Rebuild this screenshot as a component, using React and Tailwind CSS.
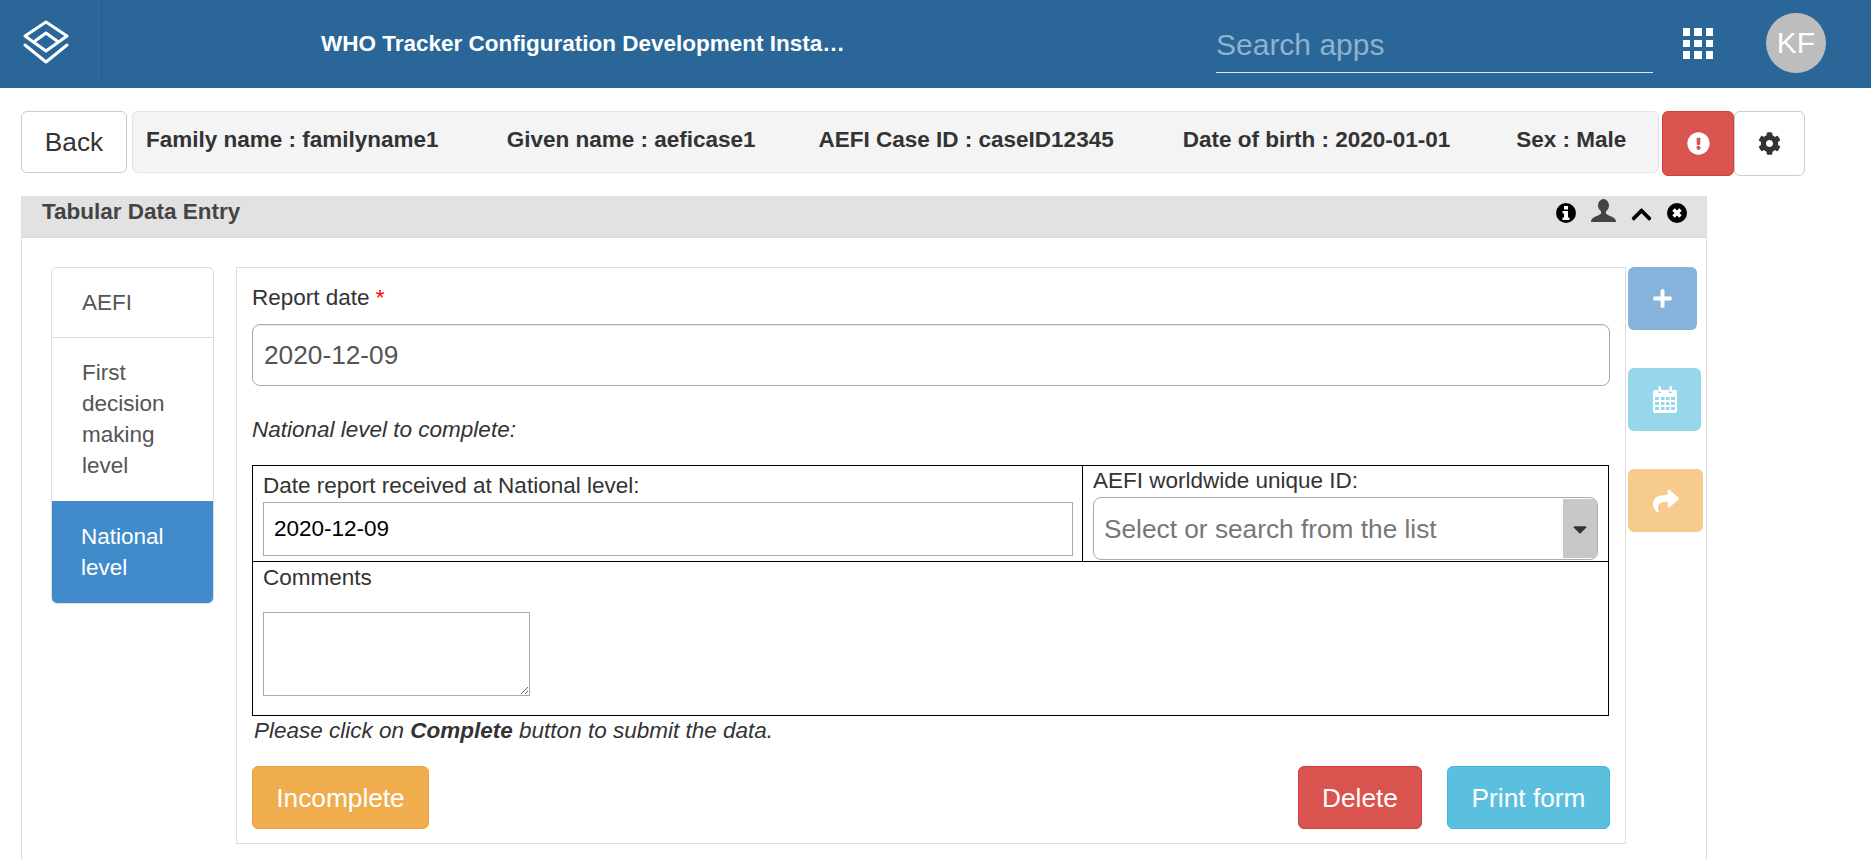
import React from "react";
import { FaCog, FaExclamationCircle, FaPlus, FaShare, FaChevronUp, FaCaretDown } from "react-icons/fa";

const sideItems = ["AEFI", "First decision making level"];

function Logo() {
  return (
    <svg width="46" height="44" viewBox="0 0 46 44" fill="none" stroke="white" strokeWidth="3" strokeLinejoin="round" strokeLinecap="round">
      <path d="M23 2 L44 16 L23 31 L2 16 Z" />
      <path d="M12 21 L23 13 L34 21" />
      <path d="M2 25 L23 42 L44 25" />
    </svg>
  );
}

function AppsGrid() {
  return (
    <div className="grid grid-cols-3 gap-[4px] w-[30px]">
      {Array.from({ length: 9 }).map((_, i) => (
        <div key={i} className="h-[7.5px] bg-white" />
      ))}
    </div>
  );
}

function CalendarIcon() {
  return (
    <svg width="24" height="27" viewBox="0 0 24 27" fill="white">
      <path fillRule="evenodd" d="M2 4h3v3h3V4h8v3h3V4h3a2 2 0 0 1 2 2v19a2 2 0 0 1-2 2H2a2 2 0 0 1-2-2V6a2 2 0 0 1 2-2zM2 11v3h4v-3zM8 11v3h3.500v-3zM13 11v3h3.500v-3zM18 11v3h4v-3zM2 16v3h4v-3zM8 16v3h3.500v-3zM13 16v3h3.500v-3zM18 16v3h4v-3zM2 21v3h4v-3zM8 21v3h3.500v-3zM13 21v3h3.500v-3zM18 21v3h4v-3z" />
      <rect x="5.500" y="0" width="2.500" height="6" rx="1.200" />
      <rect x="16.500" y="0" width="2.500" height="6" rx="1.200" />
    </svg>
  );
}

function InfoIcon() {
  return (
    <svg width="20" height="20" viewBox="0 0 20 20" className="mt-[7px]">
      <circle cx="10" cy="10" r="10" fill="black" />
      <rect x="8" y="3" width="4" height="3.500" fill="white" />
      <path d="M6.500 8h5.500v6.500h1.500v2.500h-7v-2.500h1.500v-4h-1.500z" fill="white" />
    </svg>
  );
}

function CloseIcon() {
  return (
    <svg width="20" height="20" viewBox="0 0 20 20" className="ml-[14px] mt-[7px]">
      <circle cx="10" cy="10" r="10" fill="black" />
      <path d="M6.500 6.500l7 7M13.500 6.500l-7 7" stroke="white" strokeWidth="3.500" />
    </svg>
  );
}

function UserIcon() {
  return (
    <svg width="25" height="23" viewBox="0 0 25 23" fill="#444" className="ml-[15px] mt-[3px]">
      <ellipse cx="12.500" cy="6.500" rx="5.500" ry="6.500" />
      <path d="M10 11h5v3.500c0 1 5 2.500 8 4.500 1.300 1 2 2.500 2 4H0c0-1.500.7-3 2-4 3-2 8-3.500 8-4.500z" />
    </svg>
  );
}

export default function App() {
  return (
    <div className="font-['Liberation_Sans',Arial,sans-serif] text-[22.5px] leading-[28px] text-[#333] bg-white min-h-screen">
      {/* Top bar */}
      <header className="h-[88px] bg-[#2a6698] flex items-start">
        <div className="w-[102px] h-[81px] border-r border-[#255d8a] flex items-start pl-[23px] pt-[20px]">
          <Logo />
        </div>
        <div className="ml-[219px] mt-[29px] w-[530px] font-bold text-white leading-[30px] whitespace-nowrap">
          WHO Tracker Configuration Development Insta…
        </div>
        <input
          className="ml-[365px] mt-[21px] w-[437px] h-[52px] pb-[3px] bg-transparent border-b border-[#dfe8ef] text-[30px] outline-none text-white placeholder:text-[#8fb2cd]"
          placeholder="Search apps"
        />
        <div className="ml-[30px] mt-[28px]">
          <AppsGrid />
        </div>
        <div className="ml-[53px] mt-[13px] w-[60px] h-[60px] rounded-full bg-[#bdbdbd] text-white text-[30px] flex items-center justify-center">
          KF
        </div>
      </header>

      {/* Patient info */}
      <div className="mt-[23px] pl-[21px] flex items-start">
        <button className="w-[106px] h-[62px] bg-white border border-[#ccc] rounded-[6px] text-[26.25px]">Back</button>
        <div className="ml-[5px] w-[1527px] h-[62px] bg-[#f4f4f4] border border-[#e3e3e3] rounded-[6px] pl-[13px] pt-[13px] flex font-bold leading-[30px] whitespace-nowrap">
          <span>Family name : familyname1</span>
          <span className="ml-[68px]">Given name : aeficase1</span>
          <span className="ml-[63px]">AEFI Case ID : caseID12345</span>
          <span className="ml-[69px]">Date of birth : 2020-01-01</span>
          <span className="ml-[66px]">Sex : Male</span>
        </div>
        <button className="ml-[3px] w-[72px] h-[65px] bg-[#d9534f] border border-[#d43f3a] rounded-[6px] text-white flex items-center justify-center">
          <FaExclamationCircle size={23} />
        </button>
        <button className="w-[71px] h-[65px] bg-white border border-[#ccc] rounded-[6px] text-[#333] flex items-center justify-center">
          <FaCog size={23} />
        </button>
      </div>

      {/* Panel */}
      <div className="mt-[20px] ml-[21px] w-[1686px] border-x border-[#ddd]">
        <div className="h-[42px] bg-[#e2e2e2] border-b border-[#dadada] flex items-start pl-[20px] pr-[19px]">
          <span className="font-bold text-[#444] mt-[2px]">Tabular Data Entry</span>
          <div className="ml-auto flex items-start text-black">
            <InfoIcon />
            <UserIcon />
            <FaChevronUp size={23} className="ml-[14px] mt-[7px]" />
            <CloseIcon />
          </div>
        </div>

        <div className="flex items-start pl-[29px] pt-[29px] pb-[17px]">
          {/* Side tabs */}
          <div className="w-[163px] border border-[#ddd] rounded-[6px] overflow-hidden text-[#555] leading-[31px]">
            {sideItems.map((item, i) => (
              <div key={item} className={i === 0 ? "pl-[30px] pr-[30px] pt-[19px] h-[70px] border-b border-[#ddd]" : "pl-[30px] pr-[20px] pt-[19px] h-[163px]"}>
                {item}
              </div>
            ))}
            <div className="bg-[#428bca] text-white pl-[30px] pr-[30px] pt-[20px] h-[103px] -mb-px -mx-px">National level</div>
          </div>

          {/* Form */}
          <div className="ml-[22px] w-[1390px] border border-[#ddd] pl-[15px] pr-[15px] pt-[16px] pb-[14px]">
            <div>
              Report date <span className="text-[#f00]">*</span>
            </div>
            <input
              readOnly
              value="2020-12-09"
              className="mt-[12px] w-[1358px] h-[62px] border border-[#aaa] rounded-[8px] px-[11px] text-[26.25px] text-[#555] outline-none shadow-[inset_0_1px_1px_rgba(0,0,0,0.075)]"
            />
            <div className="mt-[30px] italic">National level to complete:</div>

            <div className="mt-[21px] w-[1357px] border border-black">
              <div className="flex h-[96px] border-b border-black">
                <div className="w-[830px] border-r border-black pl-[10px] pt-[6px]">
                  <div>Date report received at National level:</div>
                  <input
                    readOnly
                    value="2020-12-09"
                    className="mt-[2px] w-[810px] h-[54px] border border-[#aaa] px-[10px] text-[22.5px] text-black outline-none"
                  />
                </div>
                <div className="flex-1 pl-[10px] pt-[1px]">
                  <div>AEFI worldwide unique ID:</div>
                  <div className="mt-[2px] w-[505px] h-[63px] border border-[#aaa] rounded-[8px] flex items-stretch overflow-hidden">
                    <input
                      readOnly
                      placeholder="Select or search from the list"
                      className="flex-1 min-w-0 px-[10px] pt-[1px] text-[26.25px] outline-none placeholder:text-[#777]"
                    />
                    <div className="w-[34px] my-[1px] bg-[#c8c8c8] flex items-center justify-center text-[#333]">
                      <FaCaretDown size={22} />
                    </div>
                  </div>
                </div>
              </div>
              <div className="h-[153px] pl-[10px] pt-[2px]">
                <div>Comments</div>
                <textarea className="block mt-[20px] w-[267px] h-[84px] border border-[#aaa] outline-none" />
              </div>
            </div>

            <div className="mt-[1px] pl-[2px] italic">
              Please click on <b>Complete</b> button to submit the data.
            </div>

            <div className="mt-[21px] w-[1358px] flex text-white text-[26.25px]">
              <button className="w-[177px] h-[63px] bg-[#f0ad4e] border border-[#eea236] rounded-[6px]">Incomplete</button>
              <button className="ml-auto w-[124px] h-[63px] bg-[#d9534f] border border-[#d43f3a] rounded-[6px]">Delete</button>
              <button className="ml-[25px] w-[163px] h-[63px] bg-[#5bc0de] border border-[#46b8da] rounded-[6px]">Print form</button>
            </div>
          </div>

          {/* Side actions */}
          <div className="ml-[2px] flex flex-col items-start text-white">
            <button className="w-[69px] h-[63px] bg-[#85b3dc] rounded-[6px] flex items-center justify-center">
              <FaPlus size={21} />
            </button>
            <button className="mt-[38px] w-[73px] h-[63px] bg-[#97d7ec] rounded-[6px] flex items-center justify-center">
              <CalendarIcon />
            </button>
            <button className="mt-[38px] w-[75px] h-[63px] bg-[#f6cb8d] rounded-[6px] flex items-center justify-center">
              <FaShare size={26} />
            </button>
          </div>
        </div>
      </div>
    </div>
  );
}
